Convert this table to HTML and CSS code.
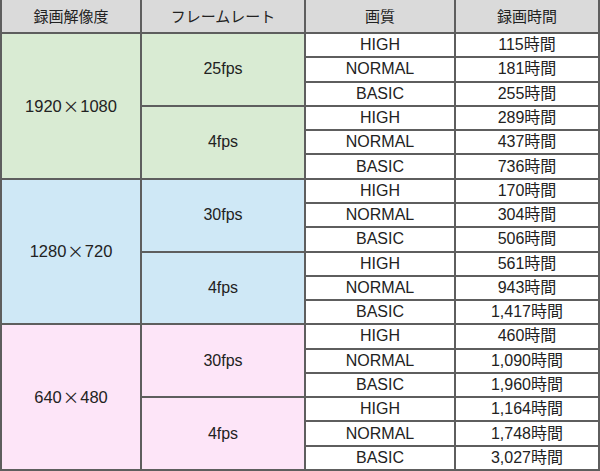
FILE: index.html
```html
<!DOCTYPE html>
<html lang="ja">
<head>
<meta charset="utf-8">
<link rel="stylesheet" href="styles.css">
</head>
<body>
<div class="table">
  <div class="cell head">録画解像度</div>
  <div class="cell head">フレームレート</div>
  <div class="cell head">画質</div>
  <div class="cell head">録画時間</div>

  <div class="cell res green r6">1920<span class="x">×</span>1080</div>
  <div class="cell fps green r3">25fps</div>
  <div class="cell">HIGH</div><div class="cell">115時間</div>
  <div class="cell">NORMAL</div><div class="cell">181時間</div>
  <div class="cell">BASIC</div><div class="cell">255時間</div>
  <div class="cell fps green r3">4fps</div>
  <div class="cell">HIGH</div><div class="cell">289時間</div>
  <div class="cell">NORMAL</div><div class="cell">437時間</div>
  <div class="cell">BASIC</div><div class="cell">736時間</div>

  <div class="cell res blue r6">1280<span class="x">×</span>720</div>
  <div class="cell fps blue r3">30fps</div>
  <div class="cell">HIGH</div><div class="cell">170時間</div>
  <div class="cell">NORMAL</div><div class="cell">304時間</div>
  <div class="cell">BASIC</div><div class="cell">506時間</div>
  <div class="cell fps blue r3">4fps</div>
  <div class="cell">HIGH</div><div class="cell">561時間</div>
  <div class="cell">NORMAL</div><div class="cell">943時間</div>
  <div class="cell">BASIC</div><div class="cell">1,417時間</div>

  <div class="cell res pink r6">640<span class="x">×</span>480</div>
  <div class="cell fps pink r3">30fps</div>
  <div class="cell">HIGH</div><div class="cell">460時間</div>
  <div class="cell">NORMAL</div><div class="cell">1,090時間</div>
  <div class="cell">BASIC</div><div class="cell">1,960時間</div>
  <div class="cell fps pink r3">4fps</div>
  <div class="cell">HIGH</div><div class="cell">1,164時間</div>
  <div class="cell">NORMAL</div><div class="cell">1,748時間</div>
  <div class="cell">BASIC</div><div class="cell">3,027時間</div>
</div>
</body>
</html>
```
FILE: styles.css
```css
html, body {
  margin: 0;
  padding: 0;
  background: #ffffff;
}
.table {
  box-sizing: border-box;
  width: 600px;
  height: 471px;
  display: grid;
  grid-template-columns: 138px 162px 148px 1fr;
  grid-template-rows: 32px repeat(18, 1fr);
  gap: 2px;
  padding: 0 2px 2px 2px;
  background: #5e5e5e;
  font-family: "Liberation Sans", "Noto Sans CJK JP", sans-serif;
  font-size: 16px;
  color: #222222;
}
.cell {
  background: #ffffff;
  display: flex;
  align-items: center;
  justify-content: center;
  line-height: 1;
}
.head {
  background: #dadada;
  font-size: 15px;
}
.res {
  font-size: 16.5px;
}
.x {
  font-family: "Noto Sans CJK JP", sans-serif;
  padding: 0 1px;
}
.r6 { grid-row: span 6; }
.r3 { grid-row: span 3; }
.green { background: #d9ebd3; }
.blue { background: #cfe8f6; }
.pink { background: #fde5f8; }
```
